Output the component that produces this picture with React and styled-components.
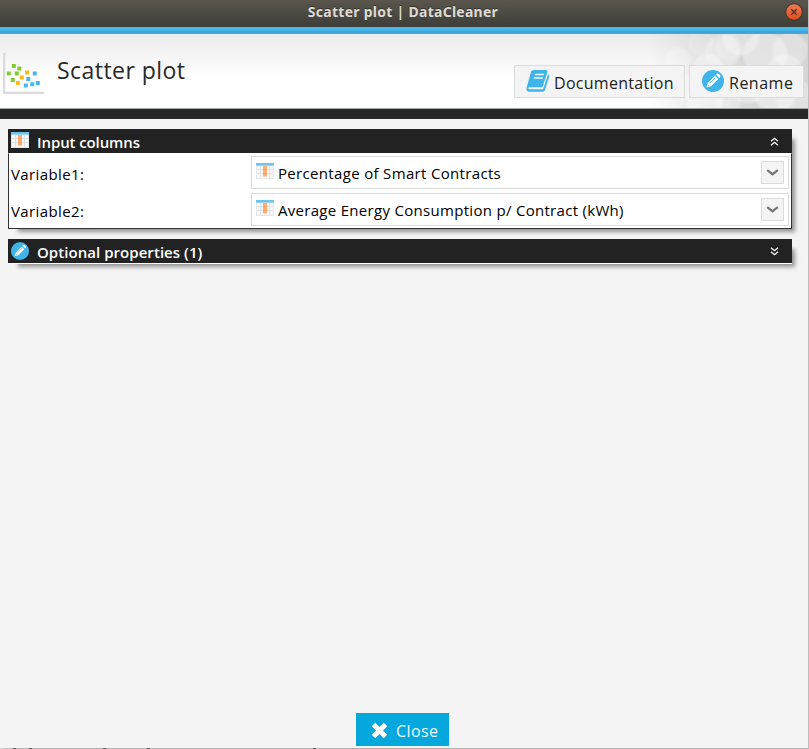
import React from "react";
import styled, { createGlobalStyle } from "styled-components";

const GlobalStyle = createGlobalStyle`
  *, *::before, *::after { box-sizing: border-box; }
  html, body { margin: 0; padding: 0; background: #f4f4f4; overflow: hidden; }
  body { font-family: "Open Sans", "Noto Sans", sans-serif; color: #111; }
  svg { display: block; flex: none; }
`;

const Window = styled.main`
  width: 809px;
  height: 749px;
  display: flex;
  flex-direction: column;
  background: #f4f4f4;
  border-right: 1px solid #bdbdbd;
`;

const BottomEdge = styled.div`
  height: 1px;
  flex: none;
  background:
    linear-gradient(#60636c, #60636c) 13px 0 / 3px 1px no-repeat,
    linear-gradient(#60636c, #60636c) 29px 0 / 3px 1px no-repeat,
    linear-gradient(#60636c, #60636c) 103px 0 / 3px 1px no-repeat,
    linear-gradient(#60636c, #60636c) 147px 0 / 3px 1px no-repeat,
    linear-gradient(#60636c, #60636c) 313px 0 / 3px 1px no-repeat,
    linear-gradient(90deg, #d8d8d8, #b1b1b1 12px);
`;

const TitleBar = styled.header`
  height: 27px;
  flex: none;
  display: grid;
  grid-template-columns: 28px 1fr 28px;
  align-items: center;
  background: linear-gradient(#5a564d, #3e3d39);
`;

const WindowTitle = styled.div`
  grid-column: 2;
  padding: 0 2px 3px 0;
  text-align: center;
  font: 700 14px/18px "Noto Sans", sans-serif;
  letter-spacing: 0.27px;
  color: #dfdbd2;
  text-shadow: 0 -1px 0 #33312d;
  white-space: nowrap;
`;

const CloseWindow = styled.button`
  width: 18px;
  height: 18px;
  margin: 0 0 3px 5px;
  padding: 0;
  border: 0;
  background: none;
`;

const AccentStripe = styled.div`
  height: 7px;
  flex: none;
  background: linear-gradient(#46b8ec 0 3px, #3da5d7 4px 6px, #3bafe2);
`;

const Banner = styled.section`
  height: 75px;
  flex: none;
  display: flex;
  position: relative;
  background: linear-gradient(#ebebeb, #fff 60%);
  border-bottom: 1px solid #a3a8a8;
`;

const BannerArt = styled.svg`
  position: absolute;
  top: 0;
  right: 0;
`;

const PlotIcon = styled.svg`
  margin: 19px 0 0 3px;
`;

const PageTitle = styled.h1`
  margin: 19px 0 0 13px;
  flex: 1;
  font-size: 23px;
  line-height: 35px;
  font-weight: 400;
  letter-spacing: 0.45px;
  color: #2a2a2a;
`;

const BannerActions = styled.div`
  position: relative;
  display: flex;
  gap: 4px;
  margin: 31px 4px 0 0;
`;

const ActionButton = styled.button`
  width: ${(p) => p.$width}px;
  height: 33px;
  display: flex;
  padding: 4px 0 0 ${(p) => p.$inset}px;
  gap: ${(p) => p.$gap}px;
  background: #f4f4f4;
  border: 1px solid #dadbdb;
  font: 400 16px/27px "Open Sans", sans-serif;
  letter-spacing: ${(p) => p.$spacing}px;
  color: #222;
  white-space: nowrap;
`;

const DarkStripe = styled.div`
  height: 10px;
  flex: none;
  background: #282828;
`;

const Content = styled.section`
  flex: 1;
  padding: 10px 16px 0 8px;
`;

const Panel = styled.section`
  position: relative;
  margin-bottom: ${(p) => (p.$open ? 10 : 0)}px;
  &::before {
    content: "";
    position: absolute;
    inset: 8px 1px 1px 8px;
    box-shadow: 3px 3px 4px 1px #666a;
  }
`;

const PanelHeader = styled.header`
  position: relative;
  height: ${(p) => (p.$open ? 24 : 25)}px;
  display: flex;
  background: #222;
  padding: 3px 13px 0 3px;
  border-bottom: ${(p) => (p.$open ? "0" : "1px solid #fff")};
`;

const PanelTitle = styled.h2`
  flex: 1;
  margin: 0 0 0 8px;
  font: 600 15px/21px "Open Sans", sans-serif;
  letter-spacing: ${(p) => p.$spacing}px;
  color: #fff;
`;

const PanelBody = styled.div`
  position: relative;
  height: 76px;
  display: grid;
  grid-template-columns: 240px 1fr;
  grid-auto-rows: 33px;
  row-gap: 4px;
  padding: 2px 2px 0;
  background: #fff;
  border: 1px solid #333;
  border-top-color: #fff;
`;

const Label = styled.label`
  font-size: 15px;
  line-height: 36px;
  letter-spacing: 0.4px;
  color: #000;
`;

const Select = styled.div`
  display: flex;
  border: 1px solid #dadbdb;
  background: #fff;
  padding: 4px;
`;

const SelectText = styled.span`
  flex: 1;
  margin-left: 4px;
  font-size: 15px;
  line-height: 25px;
  letter-spacing: ${(p) => p.$spacing}px;
  color: #000;
  white-space: nowrap;
`;

const DropButton = styled.button`
  width: 23px;
  height: 23px;
  padding: 0 1px 1px 0;
  display: grid;
  place-items: center;
  background: #f4f4f4;
  border: 1px solid #dadbdb;
`;

const Footer = styled.footer`
  height: 35px;
  flex: none;
  display: flex;
  padding-left: 356px;
`;

const CloseButton = styled.button`
  width: 93px;
  height: 33px;
  display: flex;
  gap: 8px;
  padding: 9px 0 0 15px;
  border: 0;
  background: #05a8dc;
  font: 400 16px/19px "Open Sans", sans-serif;
  letter-spacing: 0.4px;
  color: #eefaff;
`;

const ChevronBox = styled.span`
  padding-top: 5px;
`;

function Bokeh() {
  const dots = [
    [75, 18, 17, 0.3], [60, 34, 14, 0.35], [93, 3, 18, 0.3], [117, 20, 22, 0.35],
    [142, 16, 17, 0.3], [53, 8, 12, 0.15], [127, 58, 21, 0.4], [100, 51, 18, 0.35],
    [57, 66, 18, 0.4], [80, 69, 12, 0.3], [147, 65, 19, 0.3], [42, 51, 12, 0.3],
    [30, 26, 12, 0.25], [137, 39, 18, 0.3], [81, 14, 12, 0.15],
  ];
  return (
    <BannerArt width="160" height="74" viewBox="0 0 160 74" aria-hidden="true">
      <defs>
        <linearGradient id="shade">
          <stop stopColor="#c4c4c4" stopOpacity="0" />
          <stop offset=".6" stopColor="#c4c4c4" stopOpacity=".65" />
          <stop offset="1" stopColor="#c8c8c8" stopOpacity=".75" />
        </linearGradient>
        <filter id="soft"><feGaussianBlur stdDeviation="0.8" /></filter>
      </defs>
      <rect width="160" height="74" fill="url(#shade)" />
      <g filter="url(#soft)">
        {dots.map(([x, y, r, o], i) => (
          <circle key={i} cx={x} cy={y} r={r} fill="#fff" fillOpacity={o} stroke="#fff" strokeOpacity=".2" />
        ))}
      </g>
    </BannerArt>
  );
}

function ScatterIcon() {
  const points = [
    [9, 11, "#83cd2b"], [14.5, 13.5, "#83cd2b"], [4, 18.5, "#83cd2b"], [12, 18.5, "#83cd2b"], [8, 25, "#83cd2b"],
    [22.3, 17.5, "#fdb913"], [17, 22.5, "#fdb913"], [13, 28, "#fdb913"],
    [30, 18.5, "#46b8ec"], [23.5, 24, "#46b8ec"], [21, 30.5, "#46b8ec"], [27.5, 29.2, "#46b8ec"], [33, 28, "#46b8ec"],
  ];
  return (
    <PlotIcon width="41" height="41" viewBox="0 0 41 41">
      <path d="M1 0v40H41" fill="none" stroke="#dcdcdc" strokeWidth="2.5" />
      {points.map(([x, y, c]) => <rect key={`${x}-${y}`} x={x} y={y} width="4" height="4" fill={c} transform="translate(-.2 0)" />)}
    </PlotIcon>
  );
}

const TableIcon = () => (
  <svg width="18" height="16" viewBox="0 0 18 16">
    <path fill="#e3e9ea" d="M0 0h18v16H0z" />
    <path fill="#f7f7f7" d="M1 3h16v12H1z" />
    <path d="M1 6.500h16M1 10.500h16M4.500 3v12M13.500 3v12" stroke="#dfe2e3" fill="none" />
    <path fill="#6cc5ee" d="M0 0h18v2.600H0z" />
    <path fill="#fbb06f" d="M7 3h4v10.500H7z" />
    <path d="M7 6.500h4M7 10.500h4" stroke="#f4985a" strokeWidth=".8" />
  </svg>
);

const PencilIcon = ({ size }) => (
  <svg width={size} height={size} viewBox="0 0 22 22">
    <circle cx="11" cy="11" r="11" fill="#3fb4e9" />
    <path fill="#fff" d="M4.500 17.500 5.700 13 13 5.700l3.300 3.300L9 16.300zM14 4.700l.8-.8c.7-.7 1.400-.7 2 0l1.300 1.300c.6.6.6 1.300 0 2l-.8.8z" />
    <path stroke="#3fb4e9" fill="none" strokeWidth=".8" d="m7.500 13.500 6-6M5.600 14.300l2.100 2.100" />
  </svg>
);

const BookIcon = () => (
  <svg width="24" height="22" viewBox="0 0 24 22">
    <path fill="#3fb4e9" d="M7.500 0h12.300c1.300 0 1.900.7 1.500 2L17 15.700c-.3 1-1 1.500-2 1.500H3.500c-1.500 0-1.600 2 .2 2h12c1 0 1.700-.5 2-1.500L22 4.500c1 .1 1.500.8 1.200 1.800l-4 13.200c-.4 1.400-1.400 2.200-2.700 2.200h-13C1 21.700 0 20 .5 18L5 2C5.400.8 6.200 0 7.500 0Z" />
    <path d="M8.800 4.500h9M7.800 8h9" stroke="#eefaff" strokeWidth="1.500" />
  </svg>
);

const DoubleChevron = ({ up }) => (
  <svg width="9" height="9" viewBox="0 0 9 9">
    <path
      d={up ? "m1 4.200 3.500-3 3.500 3M1 8.200l3.500-3 3.500 3" : "m1 .8 3.500 3 3.500-3M1 4.800l3.500 3 3.500-3"}
      fill="none" stroke="#fff" strokeWidth="1.200"
    />
  </svg>
);

function Variable({ label, value, spacing }) {
  return (
    <>
      <Label>{label}</Label>
      <Select>
        <svg width="18" height="20"><g transform="translate(0 2)"><TableIcon /></g></svg>
        <SelectText $spacing={spacing}>{value}</SelectText>
        <DropButton aria-label="Choose column">
          <svg width="13" height="9" viewBox="0 0 13 9"><path d="m1.200 2.200 5.300 4 5.300-4" fill="none" stroke="#777" strokeWidth="2.300" /></svg>
        </DropButton>
      </Select>
    </>
  );
}

export default function App() {
  return (
    <>
      <GlobalStyle />
      <Window>
        <TitleBar>
          <WindowTitle>Scatter plot | DataCleaner</WindowTitle>
          <CloseWindow aria-label="Close window">
            <svg width="18" height="18" viewBox="0 0 18 18">
              <defs><linearGradient id="orb" x2="0" y2="1"><stop stopColor="#f27b57" /><stop offset="1" stopColor="#df4a1b" /></linearGradient></defs>
              <circle cx="9" cy="9" r="8.300" fill="url(#orb)" stroke="#373531" />
              <path d="m6.300 6.300 5.400 5.400m0-5.400-5.400 5.400" stroke="#45302a" strokeWidth="1.300" />
            </svg>
          </CloseWindow>
        </TitleBar>
        <AccentStripe />
        <Banner>
          <Bokeh />
          <ScatterIcon />
          <PageTitle>Scatter plot</PageTitle>
          <BannerActions>
            <ActionButton $width={171} $inset={11} $gap={4} $spacing={0.28}><BookIcon />Documentation</ActionButton>
            <ActionButton $width={115} $inset={12} $gap={5} $spacing={0.5}><PencilIcon size={22} />Rename</ActionButton>
          </BannerActions>
        </Banner>
        <DarkStripe />
        <Content>
          <Panel $open>
            <PanelHeader $open>
              <TableIcon />
              <PanelTitle $spacing={-0.1}>Input columns</PanelTitle>
              <ChevronBox><DoubleChevron up /></ChevronBox>
            </PanelHeader>
            <PanelBody>
              <Variable label="Variable1:" value="Percentage of Smart Contracts" spacing={0.33} />
              <Variable label="Variable2:" value="Average Energy Consumption p/ Contract (kWh)" spacing={0.3} />
            </PanelBody>
          </Panel>
          <Panel>
            <PanelHeader>
              <PencilIcon size={18} />
              <PanelTitle $spacing={0.05}>Optional properties (1)</PanelTitle>
              <ChevronBox><DoubleChevron /></ChevronBox>
            </PanelHeader>
          </Panel>
        </Content>
        <Footer>
          <CloseButton>
            <svg width="17" height="17" viewBox="0 0 17 17"><path d="m2.500 2.500 12 12m0-12-12 12" stroke="#fff" strokeWidth="5" /></svg>
            Close
          </CloseButton>
        </Footer>
        <BottomEdge />
      </Window>
    </>
  );
}
